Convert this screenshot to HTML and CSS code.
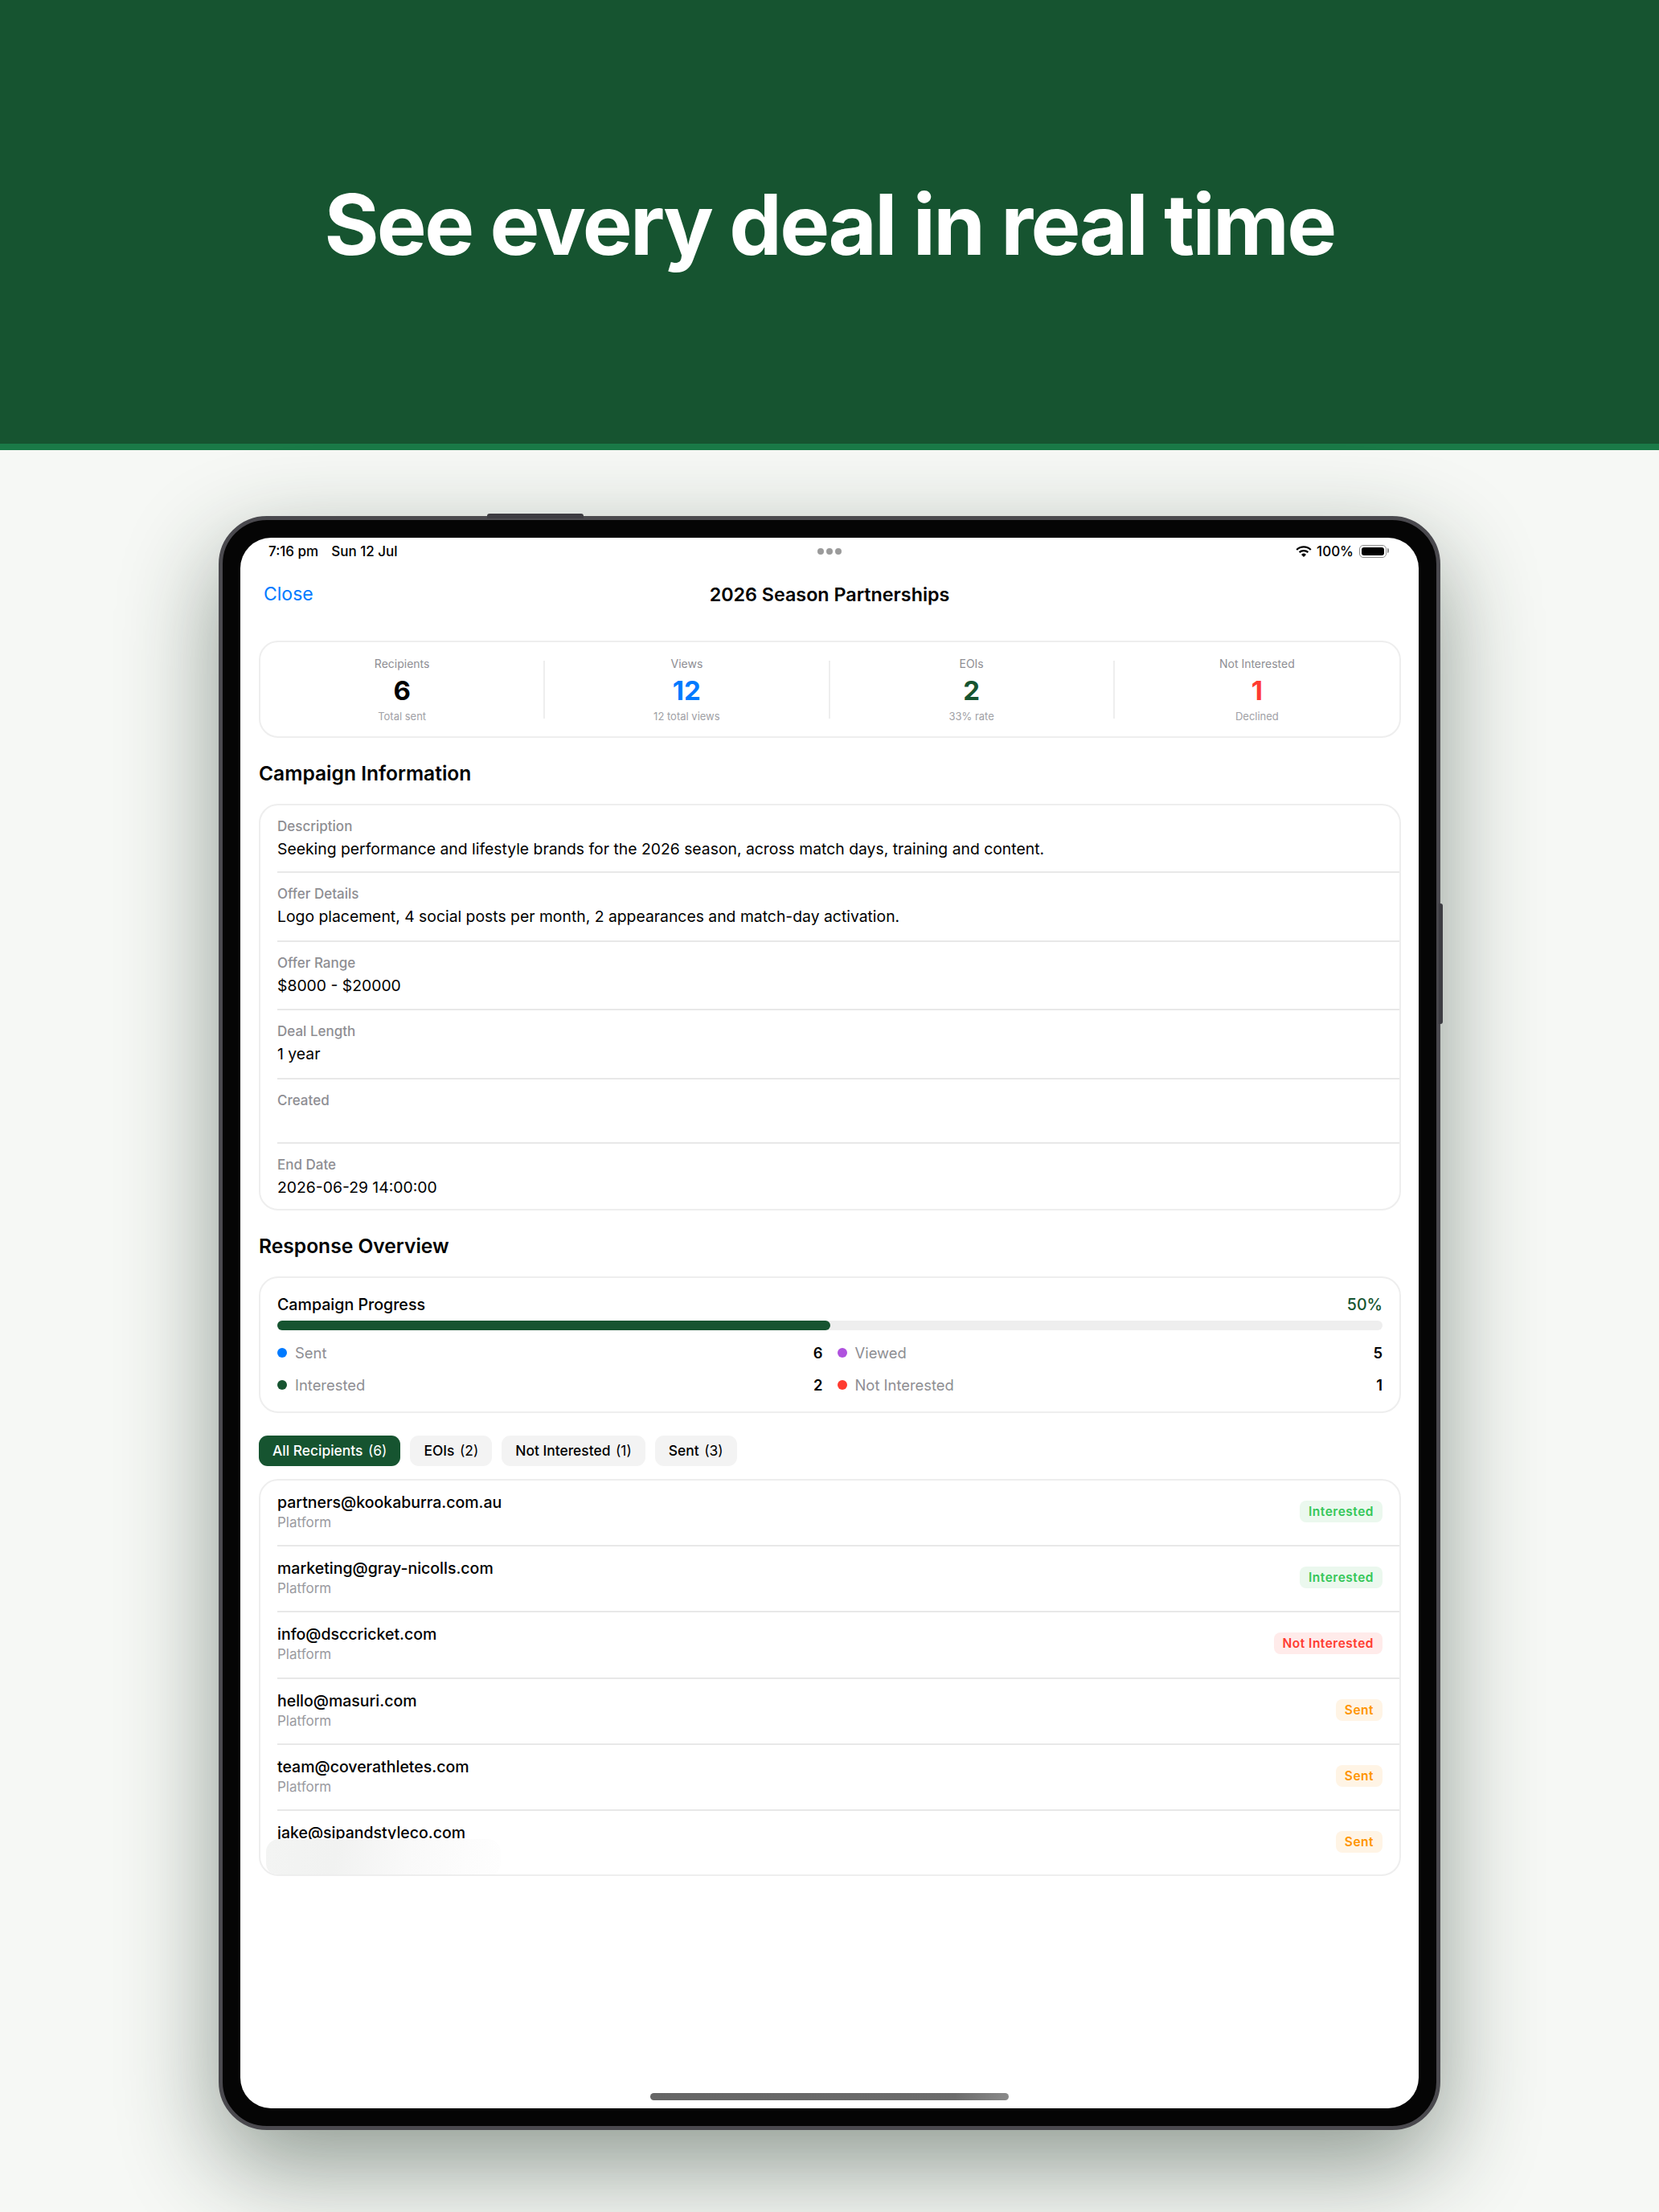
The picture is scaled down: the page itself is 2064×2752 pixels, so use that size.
FILE: index.html
```html
<!DOCTYPE html>
<html lang="en">
<head>
    <meta charset="UTF-8">
    <meta name="viewport" content="width=device-width, initial-scale=1.0">
    <title>See every deal in real time</title>
    <link rel="stylesheet" href="styles.css">
</head>
<body>

    <header class="banner">
        <h1>See every deal in real time</h1>
    </header>

    <main class="stage">
        <div class="tablet">
            <span class="btn-top"></span>
            <span class="btn-side"></span>

            <div class="screen">
                <div class="statusbar">
                    <div class="status-time"><span>7:16 pm</span><span>Sun 12 Jul</span></div>
                    <div class="status-dots"><i></i><i></i><i></i></div>
                    <div class="status-right">
                        <svg class="wifi" viewBox="0 0 20 14" width="20" height="14">
                            <path d="M1.2 5 A12.6 12.6 0 0 1 18.8 5" fill="none" stroke="#000" stroke-width="2.3"/>
                            <path d="M4.6 8.2 A7.8 7.8 0 0 1 15.4 8.2" fill="none" stroke="#000" stroke-width="2.3"/>
                            <path d="M10 14 L7 10.9 A4.3 4.3 0 0 1 13 10.9 Z" fill="#000"/>
                        </svg>
                        <span>100%</span>
                        <span class="battery"><b></b></span>
                    </div>
                </div>

                <nav class="navbar">
                    <a class="close">Close</a>
                    <div class="nav-title">2026 Season Partnerships</div>
                </nav>

                <div class="content">
                    <section class="card stats">
                        <div class="stat">
                            <div class="stat-label">Recipients</div>
                            <div class="stat-value">6</div>
                            <div class="stat-sub">Total sent</div>
                        </div>
                        <div class="stat">
                            <div class="stat-label">Views</div>
                            <div class="stat-value blue">12</div>
                            <div class="stat-sub">12 total views</div>
                        </div>
                        <div class="stat">
                            <div class="stat-label">EOIs</div>
                            <div class="stat-value green">2</div>
                            <div class="stat-sub">33% rate</div>
                        </div>
                        <div class="stat">
                            <div class="stat-label">Not Interested</div>
                            <div class="stat-value red">1</div>
                            <div class="stat-sub">Declined</div>
                        </div>
                    </section>

                    <h2>Campaign Information</h2>
                    <section class="card info">
                        <div class="info-row">
                            <div class="info-label">Description</div>
                            <div class="info-value">Seeking performance and lifestyle brands for the 2026 season, across match days, training and content.</div>
                        </div>
                        <div class="info-row">
                            <div class="info-label">Offer Details</div>
                            <div class="info-value">Logo placement, 4 social posts per month, 2 appearances and match-day activation.</div>
                        </div>
                        <div class="info-row">
                            <div class="info-label">Offer Range</div>
                            <div class="info-value">$8000 - $20000</div>
                        </div>
                        <div class="info-row">
                            <div class="info-label">Deal Length</div>
                            <div class="info-value">1 year</div>
                        </div>
                        <div class="info-row">
                            <div class="info-label">Created</div>
                            <div class="info-value empty"></div>
                        </div>
                        <div class="info-row">
                            <div class="info-label">End Date</div>
                            <div class="info-value">2026-06-29 14:00:00</div>
                        </div>
                    </section>

                    <h2>Response Overview</h2>
                    <section class="card progress">
                        <div class="progress-head">
                            <span>Campaign Progress</span>
                            <span class="progress-pct">50%</span>
                        </div>
                        <div class="bar"><div class="bar-fill" style="width: 50%"></div></div>
                        <div class="legend">
                            <div class="legend-item"><i class="dot bg-blue"></i><span class="legend-name">Sent</span><b>6</b></div>
                            <div class="legend-item"><i class="dot bg-purple"></i><span class="legend-name">Viewed</span><b>5</b></div>
                            <div class="legend-item"><i class="dot bg-green"></i><span class="legend-name">Interested</span><b>2</b></div>
                            <div class="legend-item"><i class="dot bg-red"></i><span class="legend-name">Not Interested</span><b>1</b></div>
                        </div>
                    </section>

                    <div class="chips">
                        <div class="chip active">All Recipients <span>(6)</span></div>
                        <div class="chip">EOIs <span>(2)</span></div>
                        <div class="chip">Not Interested <span>(1)</span></div>
                        <div class="chip">Sent <span>(3)</span></div>
                    </div>

                    <section class="card recipients">
                        <div class="recipient">
                            <div><div class="email">partners@kookaburra.com.au</div><div class="platform">Platform</div></div>
                            <span class="badge interested">Interested</span>
                        </div>
                        <div class="recipient">
                            <div><div class="email">marketing@gray-nicolls.com</div><div class="platform">Platform</div></div>
                            <span class="badge interested">Interested</span>
                        </div>
                        <div class="recipient">
                            <div><div class="email">info@dsccricket.com</div><div class="platform">Platform</div></div>
                            <span class="badge declined">Not Interested</span>
                        </div>
                        <div class="recipient">
                            <div><div class="email">hello@masuri.com</div><div class="platform">Platform</div></div>
                            <span class="badge sent">Sent</span>
                        </div>
                        <div class="recipient">
                            <div><div class="email">team@coverathletes.com</div><div class="platform">Platform</div></div>
                            <span class="badge sent">Sent</span>
                        </div>
                        <div class="recipient">
                            <div><div class="email">jake@sipandstyleco.com</div><div class="platform">Platform</div></div>
                            <span class="badge sent">Sent</span>
                        </div>
                        <div class="smudge"></div>
                    </section>
                </div>

                <div class="home-bar"></div>
            </div>
        </div>
    </main>

</body>
</html>
```

FILE: styles.css
```css
html, body {
    margin: 0;
    height: 2752px;
    overflow: hidden;
}
body {
    font-family: Inter, "Liberation Sans", sans-serif;
    background-color: #f6f8f5;
    color: #000;
}

.banner {
    box-sizing: content-box;
    height: 546px;
    padding-top: 6px;
    border-bottom: 8px solid #1a7a47;
    background: #165430;
    display: flex;
    align-items: center;
    justify-content: center;
}
.banner h1 {
    margin: 0;
    color: #fff;
    font-size: 104px;
    font-weight: 700;
    letter-spacing: -2.65px;
}

.stage {
    padding-top: 82px;
}
.tablet {
    position: relative;
    box-sizing: border-box;
    width: 1520px;
    height: 2008px;
    margin: 0 auto;
    padding: 22px;
    border: 5px solid #4a494e;
    border-radius: 60px;
    background: #050505;
    box-shadow: 0 44px 120px rgba(30, 50, 35, 0.48);
}
.btn-top {
    position: absolute;
    top: -8px;
    left: 329px;
    width: 120px;
    height: 6px;
    border-radius: 3px 3px 0 0;
    background: #3d3c42;
}
.btn-side {
    position: absolute;
    top: 477px;
    right: -8px;
    width: 5px;
    height: 150px;
    border-radius: 0 3px 3px 0;
    background: #3d3c42;
}
.screen {
    position: relative;
    height: 1954px;
    border-radius: 38px;
    background: #fff;
    overflow: hidden;
}

.statusbar {
    position: relative;
    height: 34px;
    padding: 0 37px 0 35px;
    display: flex;
    align-items: center;
    justify-content: space-between;
    font-size: 17px;
    font-weight: 500;
}
.status-time {
    display: flex;
    gap: 16px;
}
.status-dots {
    position: absolute;
    left: 718px;
    top: 13px;
    display: flex;
    gap: 3px;
}
.status-dots i {
    width: 8px;
    height: 8px;
    border-radius: 50%;
    background: #9b9b9b;
}
.status-right {
    display: flex;
    align-items: center;
    gap: 6px;
}
.battery {
    position: relative;
    box-sizing: border-box;
    width: 34px;
    height: 16px;
    margin: 0 3px 0 1px;
    padding: 2px;
    border: 1px solid #8e8e8e;
    border-radius: 5px;
}
.battery b {
    display: block;
    height: 100%;
    border-radius: 3px;
    background: #000;
}
.battery::after {
    content: "";
    position: absolute;
    top: 3px;
    right: -4px;
    width: 2px;
    height: 6px;
    border-radius: 0 2px 2px 0;
    background: #8e8e8e;
}

.navbar {
    position: relative;
    height: 72px;
    display: flex;
    align-items: center;
    justify-content: center;
}
.close {
    position: absolute;
    left: 29px;
    color: #007aff;
    font-size: 23px;
}
.nav-title {
    font-size: 23.3px;
    font-weight: 600;
}

.content {
    padding: 22px 22px 0 23px;
}
.card {
    box-sizing: border-box;
    border: 2px solid #eeeeee;
    border-radius: 24px;
    background: #fff;
}
h2 {
    margin: 28px 0 22px;
    font-size: 24.6px;
    line-height: 32px;
    font-weight: 600;
}

.stats {
    height: 121px;
    padding-top: 23px;
    display: grid;
    grid-template-columns: repeat(4, 1fr);
}
.stat {
    height: 72px;
    border-right: 2px solid #eeeeee;
    text-align: center;
}
.stat:last-child {
    border-right: 0;
}
.stat-label {
    margin-top: -5px;
    font-size: 14px;
    line-height: 18px;
    color: #8e8e93;
}
.stat-value {
    margin-top: 3px;
    font-size: 33px;
    line-height: 42px;
    font-weight: 700;
}
.stat-sub {
    margin-top: 3px;
    font-size: 13px;
    line-height: 16px;
    color: #a0a0a5;
}
.blue { color: #007aff; }
.green { color: #165430; }
.red { color: #ff3b30; }

.info-row {
    margin: 0 0 0 21px;
    padding: 16px 0 15.5px;
    border-bottom: 2px solid #e8e8e8;
}
.info-row:first-child {
    padding-bottom: 14px;
}
.info-row:last-child {
    padding-bottom: 13px;
    border-bottom: 0;
}
.info-label {
    font-size: 17px;
    line-height: 20px;
    font-weight: 500;
    color: #8e8e93;
}
.info-value {
    margin-top: 4px;
    font-size: 19.35px;
    line-height: 28px;
}
.info-value.empty {
    height: 22.5px;
}

.progress {
    height: 170px;
    padding: 19px 21px 0;
}
.progress-head {
    display: flex;
    justify-content: space-between;
    font-size: 19.6px;
    line-height: 28px;
    font-weight: 500;
}
.progress-pct {
    color: #165430;
}
.bar {
    height: 12px;
    margin-top: 6px;
    border-radius: 6px;
    background: #eeeeee;
}
.bar-fill {
    height: 100%;
    border-radius: 6px;
    background: #165430;
}
.legend {
    margin-top: 14px;
    display: grid;
    grid-template-columns: 1fr 1fr;
    column-gap: 18px;
    row-gap: 12px;
}
.legend-item {
    display: flex;
    align-items: center;
    gap: 10px;
    height: 28px;
    font-size: 18.4px;
}
.legend-name {
    flex: 1;
    color: #8e8e93;
}
.legend-item b {
    font-weight: 600;
}
.dot {
    width: 12px;
    height: 12px;
    border-radius: 50%;
}
.bg-blue { background: #007aff; }
.bg-purple { background: #af52de; }
.bg-green { background: #165430; }
.bg-red { background: #ff3b30; }

.chips {
    margin: 28px 0 16px;
    display: flex;
    gap: 12px;
}
.chip {
    height: 38px;
    padding: 0 17px;
    border-radius: 11px;
    background: #f3f3f3;
    font-size: 17.4px;
    font-weight: 500;
    line-height: 38px;
}
.chip span {
    margin-left: 2px;
    font-weight: 400;
}
.chip.active {
    background: #165430;
    color: #fff;
}

.recipients {
    position: relative;
    overflow: hidden;
    height: 494px;
}
.recipient {
    margin-left: 21px;
    padding: 14px 21px 17.4px 0;
    display: flex;
    align-items: center;
    justify-content: space-between;
    border-bottom: 2px solid #e8e8e8;
}
.recipient:nth-child(6) {
    border-bottom: 0;
}
.email {
    font-size: 19.5px;
    line-height: 26px;
    font-weight: 500;
}
.platform {
    margin-top: 1px;
    font-size: 17px;
    line-height: 22px;
    color: #9a9a9f;
}
.badge {
    padding: 0 11px;
    height: 27px;
    border-radius: 8px;
    font-size: 15.5px;
    line-height: 27px;
    font-weight: 600;
    letter-spacing: 0.5px;
}
.badge.interested { background: #ebf8ee; color: #34c759; }
.badge.declined { background: #ffebea; color: #ff3b30; }
.badge.sent { background: #fff4e5; color: #ff9500; }

.smudge {
    position: absolute;
    left: 7px;
    bottom: -2px;
    width: 292px;
    height: 46px;
    border-radius: 16px;
    background: linear-gradient(100deg, #f3f4f3 0%, #f1f2f1 30%, #f9f9f9 60%, #fefefe 100%);
}

.home-bar {
    position: absolute;
    left: 510px;
    bottom: 10px;
    width: 446px;
    height: 9px;
    border-radius: 5px;
    background: linear-gradient(90deg, #666 0%, #6c6c6c 85%, #8a8a8a 100%);
}
```
